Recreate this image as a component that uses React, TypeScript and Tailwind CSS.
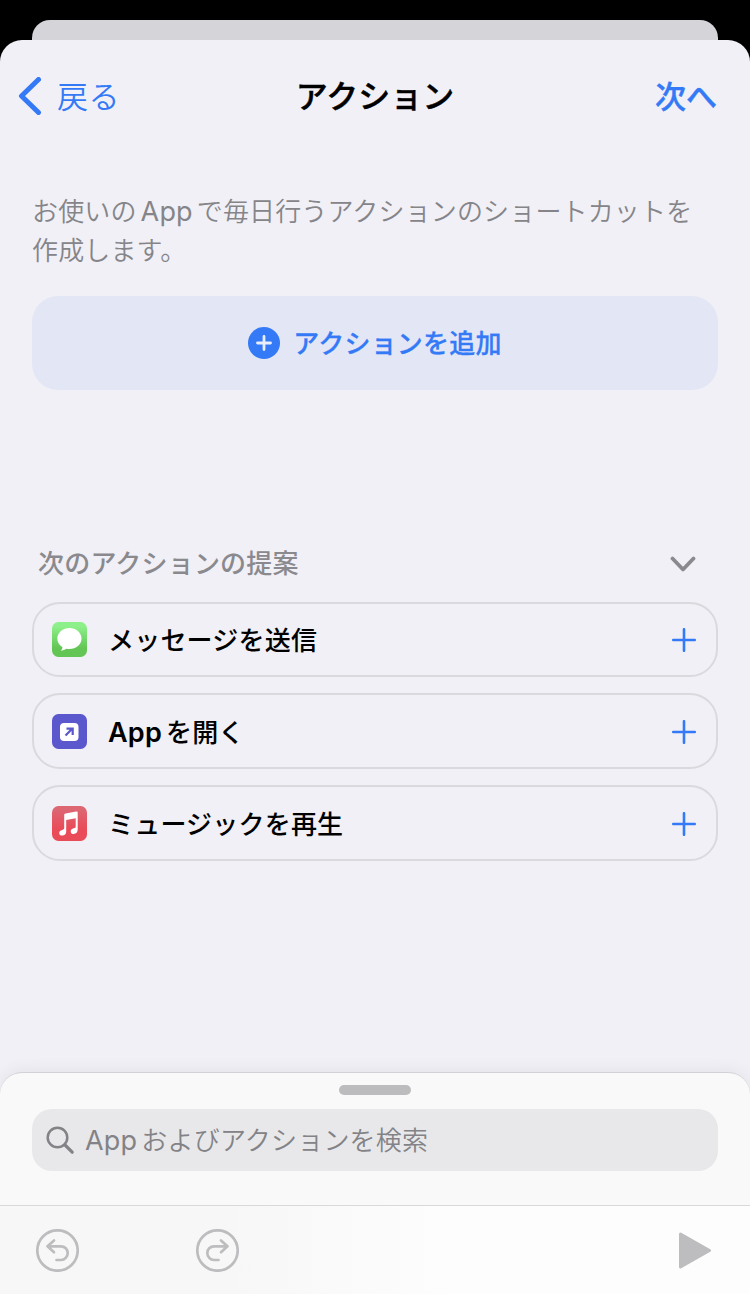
import React from 'react';

const MessagesIcon = () => (
  <svg width="35" height="35" viewBox="0 0 35 35">
    <defs>
      <linearGradient id="messages" x1="0" y1="0" x2="0" y2="1">
        <stop offset="0.12" stopColor="#8df08a" />
        <stop offset="0.75" stopColor="#62c554" />
      </linearGradient>
    </defs>
    <rect width="35" height="35" rx="6.500" fill="url(#messages)" />
    <path
      d="M17.500 6C10.800 6 5.300 10.700 5.300 16.600c0 3.700 2 6.700 5.200 8.600-.1 1.300-.7 2.400-1.700 3.500 2.200-.1 4.100-.9 5.500-2 1 .3 2.100.4 3.200.4 6.700 0 12-4.600 12-10.500S24.200 6 17.500 6Z"
      fill="#fff"
    />
  </svg>
);

const OpenAppIcon = () => (
  <svg width="35" height="35" viewBox="0 0 35 35">
    <rect width="35" height="35" rx="6.500" fill="#5a58cc" />
    <rect x="8" y="9" width="18.500" height="18" rx="4" fill="#fff" />
    <path
      d="M13.500 21.500 20 15M14.500 14.700h6.200v6.200"
      fill="none"
      stroke="#5a58cc"
      strokeWidth="2.200"
    />
  </svg>
);

const MusicIcon = () => (
  <svg width="35" height="35" viewBox="0 0 35 35">
    <defs>
      <linearGradient id="music" x1="0" y1="0" x2="0" y2="1">
        <stop offset="0.1" stopColor="#dd6673" />
        <stop offset="0.65" stopColor="#e94b58" />
      </linearGradient>
    </defs>
    <rect width="35" height="35" rx="6.500" fill="url(#music)" />
    <path
      d="M12.200 9.200c0-.9.500-1.400 1.300-1.600l10.800-2c.9-.2 1.400.2 1.400 1v17c0 2.500-1.500 4.400-4.100 4.400-1.700 0-2.900-1-2.900-2.600 0-1.700 1.200-2.700 3-3.100 1.500-.3 2-.7 2-1.800v-8.300l-9.500 1.800v11.500c0 2.400-1.500 4.100-4 4.100-1.800 0-3-1-3-2.600 0-1.700 1.200-2.700 3-3.100 1.500-.3 2-.7 2-1.800V9.200Z"
      fill="#fff"
    />
  </svg>
);

const suggestions = [
  { icon: <MessagesIcon />, app: '', label: 'メッセージを送信', height: 'h-[75px]' },
  { icon: <OpenAppIcon />, app: 'App', label: 'を開く', height: 'h-[76px] pt-px' },
  { icon: <MusicIcon />, app: '', label: 'ミュージックを再生', height: 'h-[76px] pt-px' },
];

const Header = () => {
  return (
    <header className="flex h-28 items-center justify-between pl-[18px] pr-[33px]">
      <div className="flex flex-1 items-center gap-[15px] text-[#347af6]">
        <svg width="24" height="38" viewBox="0 0 24 38">
          <path
            d="M20.500 2.500 3.500 19l17 16.500"
            fill="none"
            stroke="currentColor"
            strokeWidth="5"
            strokeLinecap="round"
            strokeLinejoin="round"
          />
        </svg>
        <span className="pb-1 text-[31px] leading-none font-[350] tracking-[0.5px]">戻る</span>
      </div>
      <h1 className="ml-[15px] pb-1 text-[32px] leading-none font-medium text-black [-webkit-text-stroke:0.4px_#000]">
        アクション
      </h1>
      <div className="flex-1 pb-1 text-right text-[31px] leading-none font-medium text-[#347af6] [-webkit-text-stroke:0.4px_#347af6]">
        次へ
      </div>
    </header>
  );
};

const Suggestions = () => {
  return (
    <section className="mt-[157px]">
      <div className="flex h-8 items-center justify-between pl-[6px] pr-[22px] text-[#8a8a8e]">
        <h2 className="pb-0.5 text-[26px] leading-8 font-medium tracking-[0.2px]">
          次のアクションの提案
        </h2>
        <svg className="mt-0.5" width="26" height="16" viewBox="0 0 26 16">
          <path
            d="m2.500 2.500 10.500 11 10.500-11"
            fill="none"
            stroke="currentColor"
            strokeWidth="3.800"
            strokeLinecap="round"
            strokeLinejoin="round"
          />
        </svg>
      </div>
      <ul className="mt-[23px] flex flex-col gap-4">
        {suggestions.map((item) => (
          <li
            key={item.label}
            className={`flex ${item.height} items-center rounded-[28px] border-2 border-[#d9d9de] pl-[18px] pr-5`}
          >
            {item.icon}
            <span className="ml-[21px] flex-1 pb-0.5 text-[26px] leading-8 font-medium tracking-[0.2px] text-black">
              {item.app && (
                <span className="mr-[4px] font-[Inter] text-[27px] leading-0 font-semibold">
                  {item.app}
                </span>
              )}
              {item.label}
            </span>
            <svg width="24" height="24" viewBox="0 0 24 24">
              <path
                d="M12 1.200v21.600M1.200 12h21.600"
                stroke="#347af6"
                strokeWidth="2.600"
                strokeLinecap="round"
              />
            </svg>
          </li>
        ))}
      </ul>
    </section>
  );
};

const SearchSheet = () => {
  return (
    <div className="flex h-[222px] flex-col rounded-t-[22px] border-t border-[#d2d2d6] bg-[#f9f9f9] shadow-[0_-2px_16px_rgba(0,0,0,0.06)]">
      <div className="mx-auto mt-3 h-[10px] w-[72px] rounded-full bg-[#bcbcbe]" />
      <div className="mx-8 mt-[14px] flex h-[62px] items-center rounded-[20px] bg-[#e8e8ea] pl-[14px] text-[#838387]">
        <svg width="29" height="29" viewBox="0 0 29 29">
          <g fill="none" stroke="currentColor" strokeLinecap="round">
            <circle cx="11.500" cy="11.500" r="9.800" strokeWidth="2.500" />
            <path d="m19 19 7.200 7.200" strokeWidth="3.200" />
          </g>
        </svg>
        <span className="ml-[10px] pb-0.5 text-[26px] leading-8 font-[350] tracking-[0.2px]">
          <span className="mr-[4px] font-[Inter] text-[27px] leading-0 font-normal">App</span>
          およびアクションを検索
        </span>
      </div>
      <div className="mt-[34px] flex flex-1 items-center border-t border-[#d9d9db] bg-linear-to-r from-[#f7f7f8] from-30% to-[#fdfdfd] to-60% pl-9 pr-[38px] pt-px text-[#bdbdbf]">
        <svg width="43" height="43" viewBox="0 0 43 43">
          <g fill="none" stroke="currentColor" strokeWidth="2.700" strokeLinecap="round" strokeLinejoin="round">
            <circle cx="21.500" cy="21.500" r="20.200" />
            <path d="M18 11.500 11.500 17.300 18 23.200M11.500 17.300H25c3.800 0 6.700 2.900 6.700 6.700s-2.900 7-6.700 7h-4.500" />
          </g>
        </svg>
        <svg className="ml-[117px]" width="43" height="43" viewBox="0 0 43 43">
          <g fill="none" stroke="currentColor" strokeWidth="2.700" strokeLinecap="round" strokeLinejoin="round">
            <circle cx="21.500" cy="21.500" r="20.200" />
            <path d="M25 11.500 31.500 17.300 25 23.200M31.500 17.300H18c-3.800 0-6.700 2.900-6.700 6.700s2.900 7 6.700 7h4.500" />
          </g>
        </svg>
        <svg className="ml-auto" width="33" height="37" viewBox="0 0 33 37">
          <path
            d="M1.500 2 30.500 18.500 1.500 35Z"
            fill="currentColor"
            stroke="currentColor"
            strokeWidth="3"
            strokeLinejoin="round"
          />
        </svg>
      </div>
    </div>
  );
};

const App = () => {
  return (
    <div
      lang="ja"
      className="flex h-[1294px] w-[750px] flex-col overflow-hidden bg-black pt-5 font-['Noto_Sans_CJK_JP',sans-serif]"
    >
      <div className="mx-8 h-5 rounded-t-[18px] bg-[#d5d4d9]" />
      <div className="flex flex-1 flex-col rounded-t-[22px] bg-[#f1f0f6]">
        <Header />
        <main className="flex-1 px-8 pt-[38px]">
          <p className="text-[26px] leading-[39px] font-[350] tracking-[0.15px] text-[#858589]">
            お使いの
            <span className="mx-[4px] font-[Inter] text-[27px] leading-0 font-normal">App</span>
            で毎日行うアクションのショートカットを
            <br />
            作成します。
          </p>
          <button className="mt-[28px] flex h-[94px] w-full items-center justify-center gap-[13px] rounded-[26px] bg-[#e3e7f5] text-[#347af6]">
            <svg width="32" height="32" viewBox="0 0 32 32">
              <circle cx="16" cy="16" r="16" fill="currentColor" />
              <path
                d="M16 9.500v13M9.500 16h13"
                stroke="#e9eefb"
                strokeWidth="2.800"
                strokeLinecap="round"
              />
            </svg>
            <span className="pb-0.5 text-[26px] leading-8 font-medium tracking-[0.2px] [-webkit-text-stroke:0.3px_#347af6]">
              アクションを追加
            </span>
          </button>
          <Suggestions />
        </main>
        <SearchSheet />
      </div>
    </div>
  );
};

export default App;
